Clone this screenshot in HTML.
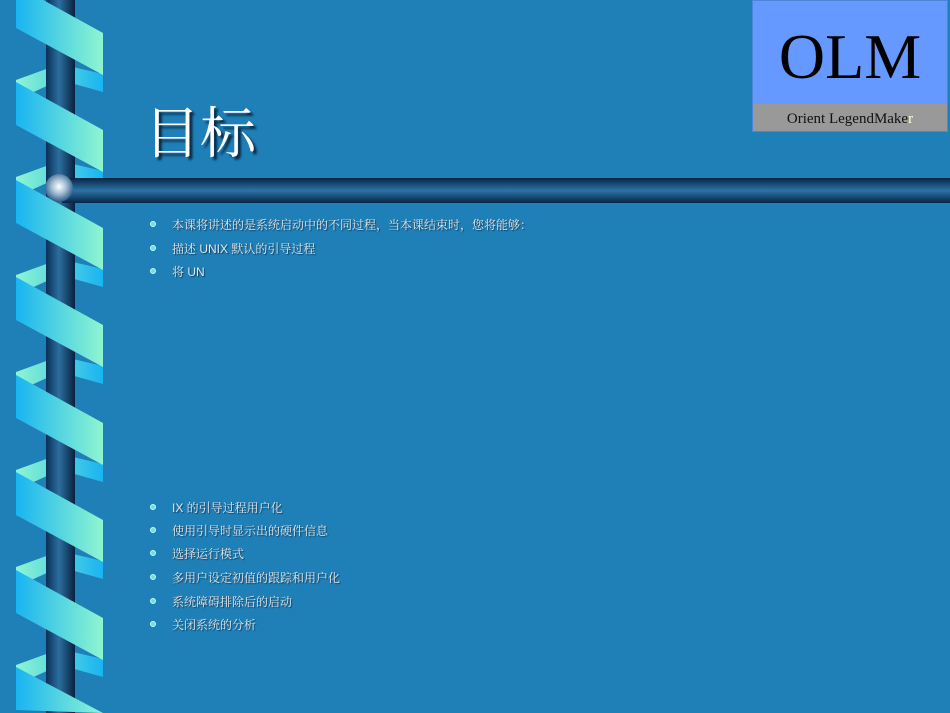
<!DOCTYPE html>
<html><head><meta charset="utf-8"><style>
*{margin:0;padding:0}
html,body{width:950px;height:713px;overflow:hidden}
body{background:#1f7fb7;position:relative;font-family:"Liberation Sans","Noto Sans CJK SC",sans-serif}
.t{position:absolute;left:144px;top:90px;font-size:56px;color:#fff;text-shadow:3px 3px 2px #0a2a44;font-family:"Liberation Serif","Noto Serif CJK SC",serif;letter-spacing:0px}
.b{position:absolute;left:150px;font-size:12px;color:#e6e6e6;text-shadow:1px 1px 1px #0d3d5e;line-height:14px;font-family:"Liberation Sans","Noto Serif CJK SC",serif;white-space:nowrap}
.b i{position:absolute;left:0;top:3px;width:6px;height:6px;border-radius:50%;background:#7fd6d6;border:1px solid #b9ffff;box-sizing:border-box}
.b span{margin-left:22px}
.logo{position:absolute;left:752px;top:0;width:196px;height:104px;background:#6699ff;font-family:"Liberation Serif",serif;font-size:64px;text-align:center;line-height:112px;color:#000;box-sizing:border-box;border:1px solid #4d86d9;border-bottom:none}
.lg{position:absolute;left:752px;top:104px;width:196px;height:28px;background:#999;font-family:"Liberation Serif",serif;font-size:15px;text-align:center;line-height:30px;color:#111;box-sizing:border-box;border:1px solid #4d86d9;border-top:none}
</style></head><body>
<svg width="950" height="713" style="position:absolute;left:0;top:0;display:block">
<defs>
<linearGradient id="pole" x1="0" x2="1" y1="0" y2="0"><stop offset="0" stop-color="#0a2f55"/><stop offset=".45" stop-color="#2b6fa0"/><stop offset="1" stop-color="#08213f"/></linearGradient>
<linearGradient id="bar" x1="0" x2="0" y1="0" y2="1"><stop offset="0" stop-color="#062544"/><stop offset=".5" stop-color="#2d73a6"/><stop offset="1" stop-color="#062544"/></linearGradient>
<linearGradient id="rib" x1="0" x2="1" y1="0" y2="0"><stop offset="0" stop-color="#19b4f2"/><stop offset="1" stop-color="#8ff5d0"/></linearGradient>
<linearGradient id="back" x1="0" x2="1" y1="0" y2="0"><stop offset="0" stop-color="#8ff5d0"/><stop offset="1" stop-color="#19b4f2"/></linearGradient>
<radialGradient id="ball" cx=".5" cy=".45" r=".55"><stop offset="0" stop-color="#fff"/><stop offset=".5" stop-color="#9fb9d0"/><stop offset="1" stop-color="#2a5a86"/></radialGradient>
</defs>
<g>
<polygon points="16,80 60,64 103,74 103,92 60,80 16,100" fill="url(#back)"/>
<polygon points="16,177 60,161 103,171 103,189 60,177 16,197" fill="url(#back)"/>
<polygon points="16,275 60,259 103,269 103,287 60,275 16,295" fill="url(#back)"/>
<polygon points="16,372 60,356 103,366 103,384 60,372 16,392" fill="url(#back)"/>
<polygon points="16,470 60,454 103,464 103,482 60,470 16,490" fill="url(#back)"/>
<polygon points="16,567 60,551 103,561 103,579 60,567 16,587" fill="url(#back)"/>
<polygon points="16,665 60,649 103,659 103,677 60,665 16,685" fill="url(#back)"/>
</g>
<rect x="46" y="0" width="29" height="713" fill="url(#pole)"/>
<rect x="62" y="178" width="888" height="25" fill="url(#bar)"/>
<g fill="url(#rib)">
<polygon points="16,-15 103,33 103,75 16,28"/>
<polygon points="16,82 103,130 103,172 16,125"/>
<polygon points="16,180 103,228 103,270 16,223"/>
<polygon points="16,277 103,325 103,367 16,320"/>
<polygon points="16,375 103,423 103,465 16,418"/>
<polygon points="16,472 103,520 103,562 16,515"/>
<polygon points="16,570 103,618 103,660 16,613"/>
<polygon points="16,667 103,713 103,713 16,710"/>
</g>
<circle cx="59" cy="188" r="14" fill="url(#ball)"/>
</svg>
<div class="logo">OLM</div>
<div class="lg">Orient LegendMake<span style="color:#ffffcc">r</span></div>
<div class="t">目标</div>
<div class="b" style="top:218px"><i></i><span>本课将讲述的是系统启动中的不同过程，当本课结束时，您将能够：</span></div>
<div class="b" style="top:242px"><i></i><span>描述 UNIX 默认的引导过程</span></div>
<div class="b" style="top:265px"><i></i><span>将 UN</span></div>
<div class="b" style="top:501px"><i></i><span>IX 的引导过程用户化</span></div>
<div class="b" style="top:524px"><i></i><span>使用引导时显示出的硬件信息</span></div>
<div class="b" style="top:547px"><i></i><span>选择运行模式</span></div>
<div class="b" style="top:571px"><i></i><span>多用户设定初值的跟踪和用户化</span></div>
<div class="b" style="top:595px"><i></i><span>系统障碍排除后的启动</span></div>
<div class="b" style="top:618px"><i></i><span>关闭系统的分析</span></div>
</body></html>
